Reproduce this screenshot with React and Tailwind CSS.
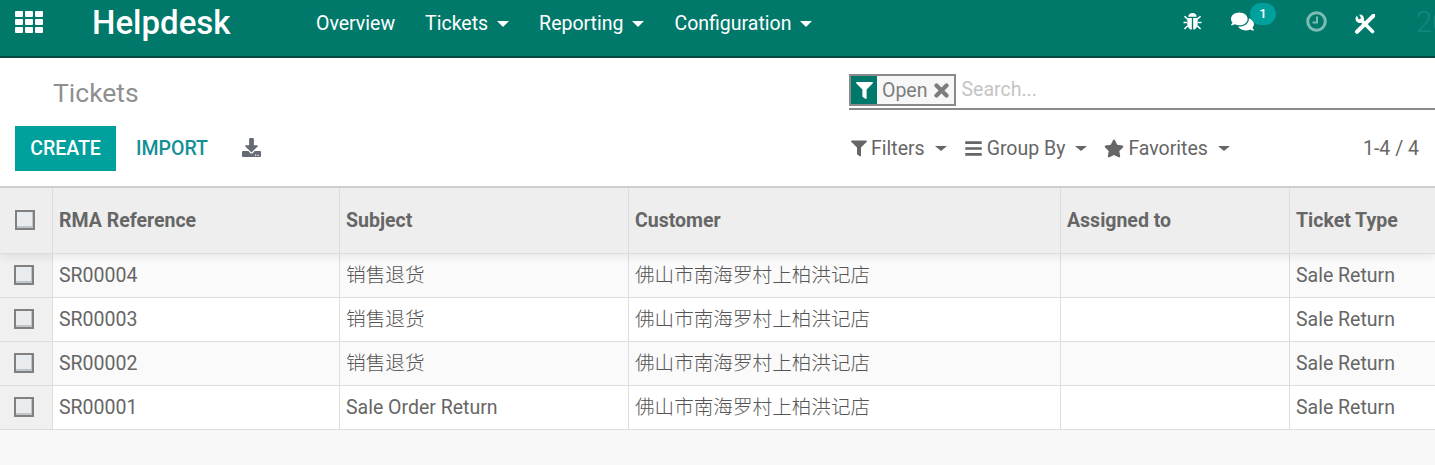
import React from "react";
import { FaComments, FaFilter, FaBars, FaStar, FaDownload } from "react-icons/fa";

const cols = "grid grid-cols-[53px_287px_289px_432px_229px_145px]";

function Check({ header }) {
  return <span className={`block w-[20px] h-[20px] -mt-[1px] border-2 border-[#808080] bg-[#e9ecef] shadow-[inset_-1px_-2px_0_#c2c5c8] ${header ? "ml-[15px]" : "ml-[14px]"}`} />;
}

function Nav({ children, caret }) {
  return (
    <span className="flex items-center gap-[9px] text-[19.5px] text-white">
      {children}
      {caret && <span className="w-0 h-0 border-x-[6px] border-x-transparent border-t-[6px] border-t-white" />}
    </span>
  );
}

function Tool({ icon, label }) {
  return (
    <span className="flex items-center text-[#666666] text-[19.5px]">
      {icon}
      <span className="ml-[4px]">{label}</span>
      <span className="ml-[10px] w-0 h-0 border-x-[6px] border-x-transparent border-t-[5px] border-t-[#666666]" />
    </span>
  );
}

function AppsIcon() {
  return (
    <svg viewBox="0 0 28 22" className="w-[28px] h-[22px] fill-white">
      {[0, 10, 20].map((x) =>
        [0, 8, 16].map((y) => <rect key={`${x}-${y}`} x={x} y={y} width="8" height="6" rx="1" />)
      )}
    </svg>
  );
}

function BugIcon() {
  return (
    <svg viewBox="0 0 20 20" className="w-[19px] h-[20px] shrink-0">
      <g stroke="#ffffff" strokeWidth="1.6" fill="none">
        <path d="M5 8 L1.5 5 M15 8 L18.5 5 M4 11.5 H0.5 M16 11.5 H19.5 M5 15 L1.5 18.5 M15 15 L18.5 18.5" />
      </g>
      <path d="M5.5 5.5 C6 2.2 8 1.5 10 1.5 C12 1.5 14 2.2 14.5 5.5 Z" fill="#ffffff" />
      <path d="M4.5 6.8 H9.3 V19 C6.5 19 4.5 16 4.5 12 Z" fill="#ffffff" />
      <path d="M15.5 6.8 H10.7 V19 C13.5 19 15.5 16 15.5 12 Z" fill="#ffffff" />
    </svg>
  );
}

function ClockIcon() {
  return (
    <svg viewBox="0 0 21 21" className="w-[21px] h-[21px]" fill="none" stroke="#7dbcb3">
      <circle cx="10.5" cy="10.5" r="8.8" strokeWidth="3" />
      <path d="M11 5.5 V11.5 H6.5" strokeWidth="2" />
    </svg>
  );
}

function ToolsIcon() {
  return (
    <svg viewBox="0 0 20 20" className="w-[20px] h-[20px]" fill="none">
      <path d="M6 6 L17.5 17.5" stroke="#ffffff" strokeWidth="3.6" strokeLinecap="round" />
      <circle cx="4.8" cy="4.8" r="4.3" fill="#ffffff" />
      <path d="M5 4.8 L2.5 0" stroke="#00796b" strokeWidth="2.6" />
      <path d="M18.8 1.5 L2 17.8" stroke="#ffffff" strokeWidth="4" strokeLinecap="round" />
    </svg>
  );
}

function CrossIcon() {
  return (
    <svg viewBox="0 0 15 15" className="w-[15px] h-[15px]">
      <path d="M2.5 2.5 L12.5 12.5 M12.5 2.5 L2.5 12.5" stroke="#7d7d7d" strokeWidth="4.2" strokeLinecap="round" />
    </svg>
  );
}

const rows = [
  ["SR00004", "销售退货", true, true],
  ["SR00003", "销售退货", false, true],
  ["SR00002", "销售退货", true, true],
  ["SR00001", "Sale Order Return", false, false],
];

export default function App() {
  return (
    <div className="w-[1435px] h-[465px] overflow-hidden bg-[#f8f8f8] font-['Roboto','Noto_Sans_CJK_SC',sans-serif]">
      <header className="h-[58px] bg-[#00796b] border-b-2 border-[#034a42] flex items-center overflow-hidden">
        <div className="w-[92px] pl-[15px] -mt-[12px]"><AppsIcon /></div>
        <span className="w-[224px] text-white text-[33px] font-medium -mt-[10px]">Helpdesk</span>
        <nav className="flex gap-[30px] -mt-[8px]">
          <Nav>Overview</Nav>
          <Nav caret>Tickets</Nav>
          <Nav caret>Reporting</Nav>
          <Nav caret>Configuration</Nav>
        </nav>
        <div className="ml-auto flex items-center -mt-[14px] text-white shrink-0 w-[252px]">
          <BugIcon />
          <span className="relative ml-[29px] shrink-0">
            <FaComments className="w-[23px] h-[21px]" />
            <span className="absolute -top-[8px] left-[19px] w-[26px] h-[22px] rounded-full bg-[#00a09d] text-[13px] font-medium flex items-center justify-center">1</span>
          </span>
          <span className="ml-[52px] shrink-0"><ClockIcon /></span>
          <span className="ml-[28px] mt-[5px] shrink-0"><ToolsIcon /></span>
          <span className="ml-[41px] whitespace-nowrap text-[29px] font-light leading-none text-[#17877b] mt-[3px]">20</span>
        </div>
      </header>

      <section className="h-[130px] bg-white border-b-2 border-[#d0d0d0] grid grid-cols-[849px_586px] grid-rows-[68px_45px]">
        <h1 className="pl-[53px] pt-[17px] text-[26.5px] leading-[36px] text-[#8f8f8f]">Tickets</h1>
        <div className="mt-[16px] h-[36px] border-b-2 border-[#8a8a8a] flex items-start">
          <div className="flex h-[32px] border-2 border-[#8a8a8a] bg-[#f7f7f7]">
            <span className="w-[26px] bg-[#00796b] flex items-center justify-center"><FaFilter className="w-[17px] h-[17px] text-white" /></span>
            <span className="ml-[5px] text-[19.5px] leading-[30px] text-[#7d7d7d]">Open</span>
            <span className="ml-[7px] mr-[5px] mt-[7px]"><CrossIcon /></span>
          </div>
          <span className="ml-[5px] text-[19.5px] leading-[32px] text-[#c4c4c4]">Search...</span>
        </div>

        <div className="flex items-center">
          <button className="ml-[15px] w-[101px] h-[45px] bg-[#00a09d] text-white text-[19.5px] font-medium">CREATE</button>
          <span className="ml-[20px] text-[#148f96] text-[19.5px] font-medium">IMPORT</span>
          <FaDownload className="ml-[34px] w-[19px] h-[19px] text-[#666a75] -mt-[2px]" />
        </div>
        <div className="flex items-center pl-[2px]">
          <div className="flex items-center gap-[17px]">
            <Tool icon={<FaFilter className="w-[16px] h-[17px]" />} label="Filters" />
            <Tool icon={<FaBars className="w-[19px] h-[19px]" />} label="Group By" />
            <Tool icon={<FaStar className="w-[20px] h-[19px]" />} label="Favorites" />
          </div>
          <span className="ml-auto mr-[16px] text-[19.5px] text-[#666666]">1-4 / 4</span>
        </div>
      </section>

      <div className={`${cols} relative h-[66px] bg-[#eeeeee] border-b border-[#dddddd] shadow-[0_3px_8px_rgba(0,0,0,0.07)] text-[19.5px] font-bold text-[#666666] items-stretch`}>
        <div className="flex items-center border-r border-[#dddddd]"><Check header /></div>
        {["RMA Reference", "Subject", "Customer", "Assigned to", "Ticket Type"].map((h, i) => (
          <div key={h} className={`flex items-center pl-[6px] ${i < 4 ? "border-r border-[#dddddd]" : ""}`}>{h}</div>
        ))}
      </div>
      {rows.map(([ref, subj, odd, cjk]) => (
        <div key={ref} className={`${cols} h-[44px] ${odd ? "bg-[#fafafa]" : "bg-white"} border-b border-[#dddddd] text-[19.5px] text-[#666666] items-stretch`}>
          <div className="flex items-center bg-[#f0f0f0] border-r border-[#dddddd]"><Check /></div>
          <div className="flex items-center pl-[6px] border-r border-[#dddddd]">{ref}</div>
          <div className={`flex items-center pl-[6px] border-r border-[#dddddd] ${cjk ? "text-[19.7px] font-light text-[#555555]" : ""}`}>{subj}</div>
          <div className="flex items-center pl-[6px] border-r border-[#dddddd] text-[19.6px] font-light text-[#555555]">佛山市南海罗村上柏洪记店</div>
          <div className="flex items-center pl-[6px] border-r border-[#dddddd]"></div>
          <div className="flex items-center pl-[6px]">Sale Return</div>
        </div>
      ))}
    </div>
  );
}
